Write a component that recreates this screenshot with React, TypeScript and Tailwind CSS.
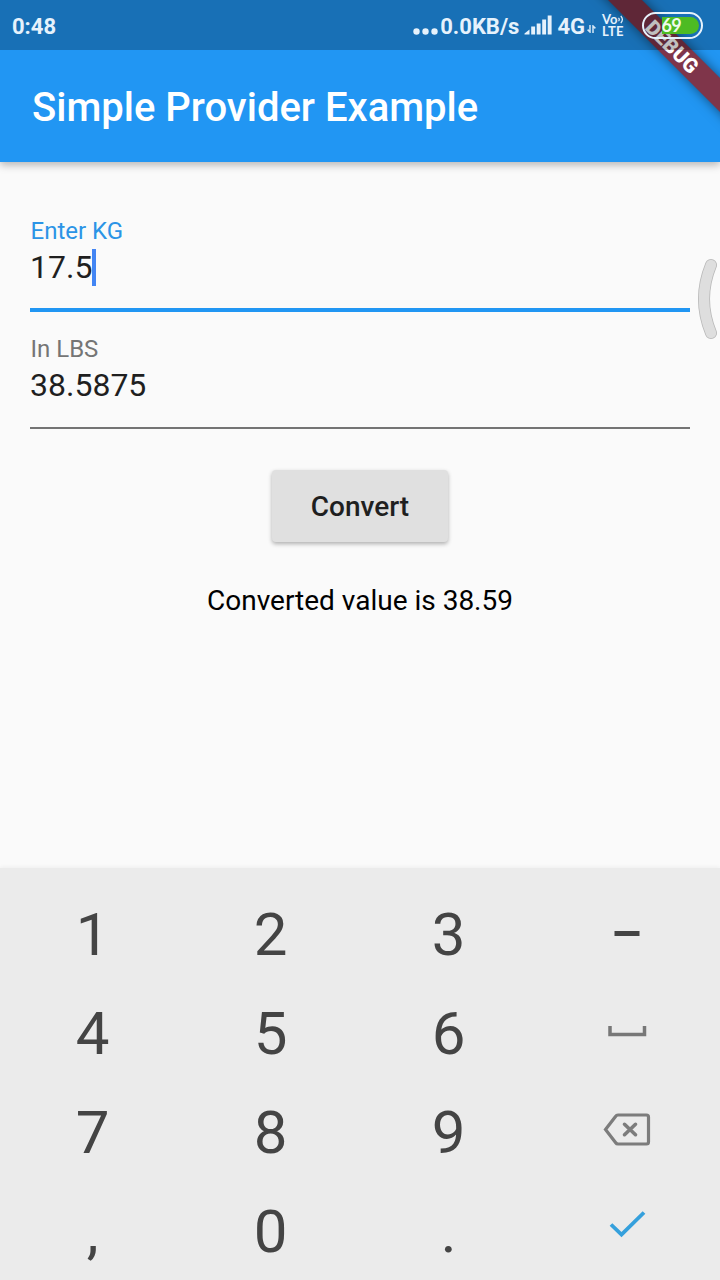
import type { ReactNode } from "react";

function SignalBars() {
  return (
    <svg className="ml-[5px] h-5 w-7 shrink-0" viewBox="0 0 28 20" fill="#e6f2fc">
      <path d="M0.5 19.5V18.5L5.5 14.5V19.5Z" />
      <rect x="7.2" y="11.5" width="3.9" height="8" />
      <rect x="12.7" y="8.5" width="3.9" height="11" />
      <rect x="18.2" y="4.5" width="3.9" height="15" />
      <rect x="23.7" y="0.5" width="3.9" height="19" />
    </svg>
  );
}

function DataArrows() {
  return (
    <svg className="mt-[5px] ml-[2px] h-2 w-[9px] shrink-0" viewBox="0 0 9 8" fill="none" stroke="#d3e6f6" strokeWidth="1.5">
      <path d="M3 0V7L0.6 4.6M6 8V1L8.4 3.4" />
    </svg>
  );
}

function VolteBadge() {
  return (
    <div className="-mt-[3px] ml-[6px] flex w-6 flex-col font-[Lato,sans-serif] text-[13px] leading-[12px] font-bold">
      <div className="flex h-[12px] items-center">
        <span>Vo</span>
        <svg className="ml-px h-[9px] w-[6px]" viewBox="0 0 6 9" fill="none" stroke="#e6f2fc" strokeWidth="1.2">
          <path d="M0.5 2.8Q2.1 4.5 0.5 6.2M2.8 1Q6 4.5 2.8 8" />
        </svg>
      </div>
      <span className="tracking-[0.3px]">LTE</span>
    </div>
  );
}

function Battery() {
  return (
    <div className="-mt-[3px] ml-4 flex h-[27px] w-[61px] items-center rounded-full border-[2.5px] border-[#e6f2fc] px-[2.5px]">
      <div className="ml-[15px] flex h-[17px] grow items-center rounded-r-full bg-[#4dbb23] pb-px font-[Lato,sans-serif] text-[18px] leading-none font-bold tracking-[-0.8px] text-[#f0faec]">
        69
      </div>
    </div>
  );
}

function StatusBar() {
  return (
    <div className="absolute inset-x-0 top-0 flex h-[50px] items-center bg-black/25 pt-[3px] pr-[17px] pl-3 text-[22px] leading-none font-bold text-[#e6f2fc]">
      <span className="grow">0:48</span>
      <svg className="mt-[9px] mr-[2px] h-[7px] w-[25px]" viewBox="0 0 25 7" fill="#e6f2fc">
        <circle cx="3.5" cy="3.5" r="3.2" />
        <circle cx="12.5" cy="3.5" r="3.2" />
        <circle cx="21.5" cy="3.5" r="3.2" />
      </svg>
      <span>0.0KB/s</span>
      <div className="-mt-[3px] flex">
        <SignalBars />
      </div>
      <span className="ml-[5px]">4G</span>
      <DataArrows />
      <VolteBadge />
      <Battery />
    </div>
  );
}

function DebugBanner() {
  return (
    <div className="absolute top-0 right-0 h-40 w-40 overflow-hidden">
      <div className="absolute top-[35.5px] left-[12.5px] flex h-6 w-[200px] rotate-45 items-center justify-center bg-[#7f354a] pt-px pr-[3px] text-[20.4px] leading-none font-black text-white shadow-[0_0_12px_rgba(0,0,0,0.5)]">
        DEBUG
      </div>
    </div>
  );
}

function Key({ children }: { children: ReactNode }) {
  return <button className="flex h-[99.1px] items-center justify-center">{children}</button>;
}

function Keypad() {
  return (
    <div className="grid h-[412px] grid-cols-[178px_178px_178px_178px] content-start bg-[#ebebeb] pt-[17.4px] pl-[3.6px] text-[60px] leading-none text-[#444] shadow-[0_-1px_4px_rgba(0,0,0,0.05)]">
      <Key>1</Key>
      <Key>2</Key>
      <Key>3</Key>
      <Key>
        <svg className="h-[60px] w-[60px]" viewBox="0 0 60 60" fill="#444">
          <rect x="17.5" y="26" width="25" height="5" />
        </svg>
      </Key>
      <Key>4</Key>
      <Key>5</Key>
      <Key>6</Key>
      <Key>
        <svg className="h-[60px] w-[60px]" viewBox="0 0 60 60" fill="none" stroke="#777" strokeWidth="3.5">
          <path d="M13 22V30.5H47.5V22" />
        </svg>
      </Key>
      <Key>7</Key>
      <Key>8</Key>
      <Key>9</Key>
      <Key>
        <svg className="h-[60px] w-[60px]" viewBox="0 0 60 60" fill="none" stroke="#7c7c7c" strokeWidth="3.2">
          <path d="M21 12H49.5Q51.5 12 51.5 14V39Q51.5 41 49.5 41H21Q19.5 41 18.5 39.5L8.5 26.5L18.5 13.5Q19.5 12 21 12Z" />
          <path d="M27.5 21.3L38.5 31.7M38.5 21.3L27.5 31.7" strokeLinecap="round" strokeWidth="3.6" />
        </svg>
      </Key>
      <Key>,</Key>
      <Key>0</Key>
      <Key>.</Key>
      <Key>
        <svg className="h-[60px] w-[60px]" viewBox="0 0 60 60" fill="none" stroke="#35a0dc" strokeWidth="3.8">
          <path d="M14 22.5L24.5 32.7L47 10.5" />
        </svg>
      </Key>
    </div>
  );
}

export default function App() {
  return (
    <div className="relative flex h-[1280px] w-[720px] flex-col overflow-hidden bg-[#fafafa] font-[Roboto,sans-serif]">
      <header className="flex h-[162px] shrink-0 items-center bg-[#2196f3] px-8 pt-[54px] shadow-[0_3px_8px_rgba(0,0,0,0.28)]">
        <h1 className="text-[40px] leading-none font-medium whitespace-nowrap text-white">Simple Provider Example</h1>
      </header>
      <main className="flex grow flex-col px-[30px] pt-14">
        <div className="flex h-[94px] flex-col border-b-4 border-[#2196f3]">
          <label className="pl-[0.5px] text-2xl leading-[26px] text-[#2b94e6]">Enter KG</label>
          <div className="mt-[5px] flex h-[38px] items-start text-[32px] leading-[36px] text-[#1f1f1f]">
            <span>17.5</span>
            <span className="h-[37px] w-1 bg-[#4285f4]" />
          </div>
        </div>
        <div className="mt-6 flex h-[93px] flex-col border-b-2 border-[#747474]">
          <span className="pl-[0.5px] text-2xl leading-[26px] text-[#757575]">In LBS</span>
          <div className="mt-[5px] flex h-[38px] items-start text-[32px] leading-[36px] text-[#1f1f1f]">38.5875</div>
        </div>
        <button className="mt-[41px] h-[72px] w-[176px] self-center rounded-[4px] bg-[#e0e0e0] pt-[2px] text-[28px] font-medium text-[#1f1f1f] shadow-[0_2px_4px_rgba(0,0,0,0.3)]">
          Convert
        </button>
        <p className="mt-[42px] text-center text-[28px] leading-[34px] text-black">Converted value is 38.59</p>
      </main>
      <Keypad />
      <DebugBanner />
      <StatusBar />
      <svg className="absolute top-[258px] left-[696px] h-[82px] w-6" viewBox="0 0 24 82" fill="none" strokeLinecap="round">
        <path d="M15 7Q1 41 15 75" stroke="#b8b8b8" strokeWidth="12" />
        <path d="M15 7Q1 41 15 75" stroke="#dedede" strokeWidth="10.4" />
      </svg>
    </div>
  );
}
